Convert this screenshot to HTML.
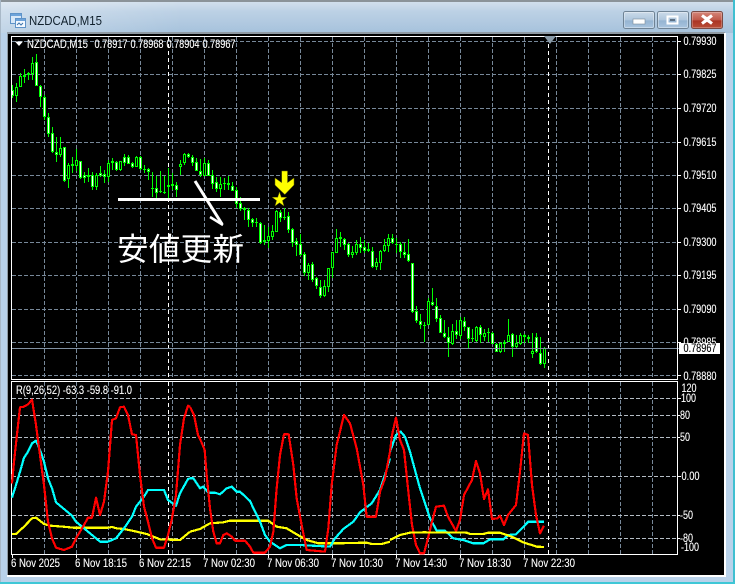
<!DOCTYPE html>
<html><head><meta charset="utf-8"><style>
html,body{margin:0;padding:0;width:735px;height:584px;overflow:hidden;background:#b9d2ea}
svg{display:block;position:absolute;left:0;top:0}
text{font-family:"Liberation Sans",sans-serif;font-size:12px;fill:#fff;stroke:#fff;stroke-width:.12}
.c{font-family:"Liberation Sans","Noto Sans CJK JP",sans-serif;font-size:31.5px;shape-rendering:auto;stroke:none}
</style></head><body>
<svg id="s" width="735" height="584" viewBox="0 0 735 584" xmlns="http://www.w3.org/2000/svg">
<defs>
<linearGradient id="t" x1="0" y1="0" x2="0" y2="1"><stop offset="0" stop-color="#d6e2ee"/><stop offset=".35" stop-color="#bcd1e5"/><stop offset="1" stop-color="#a6c2dc"/></linearGradient>
<linearGradient id="tx" x1="0" y1="0" x2="1" y2="0"><stop offset="0" stop-color="#fff" stop-opacity=".3"/><stop offset=".25" stop-color="#fff" stop-opacity="0"/></linearGradient>
<linearGradient id="b" x1="0" y1="0" x2="0" y2="1"><stop offset="0" stop-color="#cddcea"/><stop offset=".5" stop-color="#aec6dd"/><stop offset=".55" stop-color="#95b4d2"/><stop offset="1" stop-color="#abc6e0"/></linearGradient>
<linearGradient id="r" x1="0" y1="0" x2="0" y2="1"><stop offset="0" stop-color="#d68a7d"/><stop offset=".5" stop-color="#c05848"/><stop offset=".55" stop-color="#aa3524"/><stop offset="1" stop-color="#bb5039"/></linearGradient>
</defs>
<rect width="735" height="584" fill="#b9d2ea"/>
<rect width="735" height="33" fill="url(#t)"/>
<rect width="735" height="33" fill="url(#tx)"/>
<rect width="735" height="2" fill="#8b9399"/>
<rect x="0" y="0" width="1" height="584" fill="#a9b9c8"/>
<rect x="733" y="0" width="2" height="584" fill="#3fbfd0"/>
<rect y="582" width="735" height="2" fill="#3fc7d6"/>
<rect x="7" y="32" width="718" height="2" fill="#8f9aa3"/>
<rect x="7" y="32" width="1" height="545" fill="#8f9aa3"/>
<rect x="8" y="34" width="716" height="541" fill="#000"/>
<rect x="724" y="33" width="2" height="544" fill="#fff"/>
<rect x="7" y="575" width="719" height="2" fill="#fff"/>

<!-- title icon -->
<g>
<rect x="10.5" y="13.5" width="11" height="10" fill="#d8e8f8" stroke="#5f93c8"/>
<rect x="11" y="14" width="10" height="2" fill="#6da3da"/>
<rect x="15.5" y="18.5" width="10" height="9" fill="#f4f9ff" stroke="#5f93c8"/>
<rect x="16" y="19" width="9" height="2" fill="#6da3da"/>
<path d="M17 25l2-2 2 2 2-2" fill="none" stroke="#3d74ad"/>
</g>
<text x="29" y="25" textLength="73" lengthAdjust="spacingAndGlyphs" style="font-size:13px;fill:#10202c;stroke:none">NZDCAD,M15</text>

<!-- buttons -->
<rect x="623.5" y="11.5" width="31" height="17" rx="2" fill="url(#b)" stroke="#6f8395"/>
<rect x="624.5" y="12.5" width="29" height="15" rx="1" fill="none" stroke="#fff" stroke-opacity=".35"/>
<rect x="633" y="19" width="12" height="5" fill="#fff" stroke="#7a8a99" stroke-width=".6"/>
<rect x="657.5" y="11.5" width="31" height="17" rx="2" fill="url(#b)" stroke="#6f8395"/>
<rect x="658.5" y="12.5" width="29" height="15" rx="1" fill="none" stroke="#fff" stroke-opacity=".35"/>
<rect x="667.5" y="16.5" width="10" height="7" fill="none" stroke="#fff" stroke-width="2"/>
<rect x="670" y="19" width="5" height="2" fill="#5c7084"/>
<rect x="691.5" y="11.5" width="31" height="17" rx="2" fill="url(#r)" stroke="#7a4a44"/>
<rect x="692.5" y="12.5" width="29" height="15" rx="1" fill="none" stroke="#fff" stroke-opacity=".25"/>
<path d="M702 15.5l5 3.5 5-3.5M702 23.5l5-3.5 5 3.5M702 15.5L712 23.5M712 15.5L702 23.5" fill="none" stroke="#fff" stroke-width="3"/>

<g id="grid" shape-rendering="crispEdges" fill="none"></g>
<g id="cs" shape-rendering="crispEdges"></g>

<g shape-rendering="crispEdges">
<path d="M12 348.5H680" stroke="#8090a2"/>
<path d="M11 36.5H678M11 379.5H678M11 381.5H678M11 554.5H678M11.5 36V380M11.5 381V555M677.5 36V380M677.5 381V555" stroke="#fff" fill="none"/>
<path d="M678 41.5h3M678 74.5h3M678 108.5h3M678 142.5h3M678 175.5h3M678 208.5h3M678 242.5h3M678 275.5h3M678 309.5h3M678 342.5h3M678 375.5h3M678 398.5h3M678 415.5h2M678 437.5h2M678 476.5h3M678 515.5h2M678 538.5h2M12.5 555v3M76.5 555v3M140.5 555v3M204.5 555v3M268.5 555v3M332.5 555v3M396.5 555v3M460.5 555v3M524.5 555v3" stroke="#fff" fill="none"/>
</g>
<path d="M15 41.5h8l-4 4.5z" fill="#fff"/>
<path d="M544 36h12l-6 8z" fill="#8a9ba8"/>

<!-- legend -->
<text x="27" y="48" textLength="61" lengthAdjust="spacingAndGlyphs">NZDCAD,M15</text>
<text x="94.5" y="48" textLength="33" lengthAdjust="spacingAndGlyphs">0.78917</text>
<text x="130.5" y="48" textLength="33" lengthAdjust="spacingAndGlyphs">0.78968</text>
<text x="166.5" y="48" textLength="33" lengthAdjust="spacingAndGlyphs">0.78904</text>
<text x="202.5" y="48" textLength="33" lengthAdjust="spacingAndGlyphs">0.78967</text>
<text x="16" y="394" textLength="116" lengthAdjust="spacingAndGlyphs">R(9,26,52) -63.3 -59.8 -91.0</text>

<!-- price axis -->
<text x="683.5" y="45" textLength="33" lengthAdjust="spacingAndGlyphs">0.79930</text>
<text x="683.5" y="78" textLength="33" lengthAdjust="spacingAndGlyphs">0.79825</text>
<text x="683.5" y="112" textLength="33" lengthAdjust="spacingAndGlyphs">0.79720</text>
<text x="683.5" y="146" textLength="33" lengthAdjust="spacingAndGlyphs">0.79615</text>
<text x="683.5" y="179" textLength="33" lengthAdjust="spacingAndGlyphs">0.79510</text>
<text x="683.5" y="212" textLength="33" lengthAdjust="spacingAndGlyphs">0.79405</text>
<text x="683.5" y="246" textLength="33" lengthAdjust="spacingAndGlyphs">0.79300</text>
<text x="683.5" y="279" textLength="33" lengthAdjust="spacingAndGlyphs">0.79195</text>
<text x="683.5" y="313" textLength="33" lengthAdjust="spacingAndGlyphs">0.79090</text>
<text x="683.5" y="346" textLength="33" lengthAdjust="spacingAndGlyphs">0.78985</text>
<rect x="679" y="343" width="41" height="11" fill="#fff"/>
<text x="683.5" y="352" textLength="33" lengthAdjust="spacingAndGlyphs" style="fill:#000;stroke:#000">0.78967</text>
<text x="683.5" y="380" textLength="33" lengthAdjust="spacingAndGlyphs">0.78880</text>

<text x="681.5" y="392" textLength="15" lengthAdjust="spacingAndGlyphs">120</text>
<text x="681" y="402" textLength="15" lengthAdjust="spacingAndGlyphs">100</text>
<text x="680" y="419" textLength="10" lengthAdjust="spacingAndGlyphs">80</text>
<text x="680" y="441" textLength="10" lengthAdjust="spacingAndGlyphs">50</text>
<text x="681.5" y="480" textLength="18" lengthAdjust="spacingAndGlyphs">0.00</text>
<text x="680" y="519" textLength="13" lengthAdjust="spacingAndGlyphs">-50</text>
<text x="680" y="542" textLength="13" lengthAdjust="spacingAndGlyphs">-80</text>
<text x="681" y="551" textLength="18" lengthAdjust="spacingAndGlyphs">-100</text>

<!-- time axis -->
<text x="11" y="567" textLength="49" lengthAdjust="spacingAndGlyphs">6 Nov 2025</text>
<text x="75" y="567" textLength="52" lengthAdjust="spacingAndGlyphs">6 Nov 18:15</text>
<text x="139" y="567" textLength="52" lengthAdjust="spacingAndGlyphs">6 Nov 22:15</text>
<text x="203" y="567" textLength="52" lengthAdjust="spacingAndGlyphs">7 Nov 02:30</text>
<text x="267" y="567" textLength="52" lengthAdjust="spacingAndGlyphs">7 Nov 06:30</text>
<text x="331" y="567" textLength="52" lengthAdjust="spacingAndGlyphs">7 Nov 10:30</text>
<text x="395" y="567" textLength="52" lengthAdjust="spacingAndGlyphs">7 Nov 14:30</text>
<text x="459" y="567" textLength="52" lengthAdjust="spacingAndGlyphs">7 Nov 18:30</text>
<text x="523" y="567" textLength="52" lengthAdjust="spacingAndGlyphs">7 Nov 22:30</text>

<!-- indicator lines -->
<svg x="0" y="381" width="678" height="174" viewBox="0 381 678 174">
<g fill="none" stroke-width="6.6" stroke-linejoin="round" shape-rendering="crispEdges">
<g transform="translate(0,375) scale(.33333)">
<polyline stroke="#ffff00" points="36,477 48,477 72,455 96,430 108,428 132,447 150,452 190,455 220,458 324,458 336,456 350,460 372,462 410,470 440,477 480,493 540,495 570,470"/>
<polyline stroke="#00ffff" points="36,368 48,330 60,290 72,248 84,230 96,205 108,197 120,225 132,260 144,310 156,340 168,382 180,392 192,402 216,422 228,440 252,460 276,480 300,500 324,500 348,490 372,460 396,425 408,395 432,365 444,345 492,345 504,375 528,392 540,355 564,312 570,310"/>
<polyline stroke="#ff0000" points="36,325 42,260 60,97 72,95 84,88 96,74 108,150 120,240 132,330 144,440 156,490 168,518 192,525 216,515 228,490 240,470 252,450 264,428 276,428 288,368 300,420 312,380 324,290 336,135 348,130 360,97 372,95 384,120 396,178 408,180 420,300 432,395 444,440 456,490 468,518 492,518 504,480 516,430 528,360 540,210 552,130 564,92 570,95"/>
</g>
<g transform="translate(190,375) scale(.33333)">
<polyline stroke="#ffff00" points="0,470 30,462 60,445 100,442 120,437 235,437 260,455 290,460 320,478 350,495 385,505 440,505 530,503 545,507 575,507 600,500"/>
<polyline stroke="#00ffff" points="0,310 10,310 30,340 40,335 55,353 75,353 90,358 110,340 125,335 140,350 150,350 180,378 195,410 210,440 225,480 240,500 270,520 290,510 330,510 420,515 435,490 460,462 490,440 510,412 545,385 570,345 585,300 600,250"/>
<polyline stroke="#ff0000" points="0,95 12,120 24,180 36,205 44,225 50,300 60,400 70,470 80,505 90,505 100,480 110,475 125,485 135,497 165,497 180,515 190,533 225,533 240,515 250,470 260,340 270,240 282,178 296,178 310,270 320,370 335,450 350,525 405,530 415,460 425,330 440,210 462,120 480,145 500,220 520,330 530,425 558,425 570,350 585,310 600,230"/>
</g>
<g transform="translate(380,375) scale(.33333)">
<polyline stroke="#00ffff" points="30,230 48,180 62,170 75,185 90,230 120,340 150,430 170,467 195,467 220,490 250,495 280,505 310,505 330,493 370,493 385,480 408,478 445,440 492,440"/>
<polyline stroke="#ff0000" points="30,230 36,180 48,128 60,195 72,225 84,340 96,450 108,510 120,535 132,535 144,490 156,440 168,395 192,392 204,425 228,468 240,435 252,360 276,315 288,258 300,295 312,372 324,343 336,432 352,430 360,422 372,450 384,420 408,390 420,290 432,175 444,180 456,330 468,420 480,475 492,452"/>
<polyline stroke="#ffff00" points="30,495 60,480 90,473 130,472 260,473 270,477 310,477 325,473 360,473 400,487 430,502 470,515 492,516"/>
</g>
</g>
</svg>

<!-- annotations -->
<rect x="118" y="198" width="142" height="3" fill="#fff"/>
<path d="M195 181L222 224" stroke="#fff" stroke-width="3" fill="none"/>
<path d="M210 217L223 225" stroke="#fff" stroke-width="2.5" fill="none"/>
<text class="c" x="117" y="260" textLength="127">安値更新</text>
<path d="M281.7 171H287.5V182.7L294 178V185L284.8 194.5L275 185V178L281.7 182.7Z" fill="#ffff00" stroke="#6b6b00" stroke-width=".5"/>
<path d="M279.5 192L281.3 197.3H286.8L282.4 200.6L284 206L279.5 202.7L275 206L276.6 200.6L272.2 197.3H277.7Z" fill="#ffff00" stroke="#6b6b00" stroke-width=".5"/>
</svg>
<script>
var d=[85,98,90,96,1,83,102,87,96,0,73,87,76,87,0,69,83,75,77,1,72,80,73,75,1,57,80,63,74,0,54,86,62,86,1,85,107,86,97,1,95,120,97,117,1,113,137,117,134,1,127,153,133,152,1,137,162,152,155,1,137,157,148,155,0,147,182,147,181,1,163,188,165,179,0,157,173,164,166,1,149,171,160,166,0,161,179,161,178,1,172,183,175,178,1,168,182,175,177,1,172,190,175,187,1,173,190,175,187,0,166,177,173,176,1,170,183,174,177,1,160,182,163,177,0,158,170,161,163,1,161,171,162,170,1,161,171,161,170,0,154,166,157,163,1,155,164,157,164,1,162,168,163,167,1,156,167,157,167,0,156,170,157,169,1,165,173,169,170,1,168,180,169,172,1,172,197,188,189,1,176,198,188,193,1,171,193,191,192,1,176,194,192,193,1,168,198,185,187,1,173,190,184,186,1,182,197,185,190,1,
160,175,164,167,0,153,165,154,163,0,153,158,154,157,1,155,166,157,163,1,158,171,162,171,1,159,177,171,175,1,158,176,163,176,0,160,176,163,176,1,170,189,175,184,1,177,192,182,189,1,177,197,184,189,0,178,190,183,184,1,176,190,183,185,1,182,191,186,191,1,187,208,190,204,1,197,211,203,209,1,207,220,208,210,1,208,227,210,220,1,218,227,219,223,1,218,227,222,223,1,222,244,223,243,1,225,245,240,242,1,227,248,236,241,0,225,240,231,237,0,210,232,211,232,0,210,222,212,218,1,208,220,217,218,1,212,233,216,230,1,228,247,229,243,1,238,256,241,245,1,234,256,244,255,1,252,276,254,273,1,263,280,265,273,0,262,282,264,280,1,277,289,278,286,1,280,298,287,296,1,280,297,286,296,0,268,292,268,287,0,252,278,252,268,0,229,253,238,253,0,232,247,237,239,1,238,250,239,245,1,243,257,244,255,1,246,258,252,255,0,240,255,244,253,0,237,253,244,248,1,240,253,247,251,1,243,252,249,251,1,247,268,251,267,1,258,270,262,267,0,250,270,251,263,0,239,252,245,251,0,234,252,238,246,0,234,244,238,243,1,238,253,244,245,1,242,258,244,252,1,243,258,252,255,1,239,262,254,261,1,263,313,263,312,1,306,323,311,321,1,314,329,321,325,1,322,342,325,326,1,298,325,301,325,0,288,306,302,305,1,298,322,306,319,1,315,333,318,333,1,320,338,333,337,1,327,357,337,343,1,324,345,331,344,0,320,339,331,335,1,317,339,320,336,0,317,331,321,327,1,327,348,327,339,1,329,342,338,339,1,326,342,327,341,0,325,343,327,335,1,329,341,333,337,0,328,342,332,333,1,332,344,333,344,1,343,352,344,352,1,342,353,343,352,0,340,352,342,344,0,319,342,335,342,0,333,357,334,347,1,335,348,343,347,0,333,345,335,344,0,334,343,335,337,1,335,343,337,339,1,333,358,351,354,0,333,353,337,352,1,337,365,353,364,1,347,368,348,364,0];
var NS="http://www.w3.org/2000/svg",h="",i,x;
for(i=0;i<d.length;i+=5){x=12+4*(i/5);
var t=d[i+2],b=d[i+3];
h+='<rect x="'+x+'" y="'+d[i]+'" width="1" height="'+(d[i+1]-d[i])+'" fill="#00ff00"/>';
h+='<rect x="'+(x-1)+'" y="'+t+'" width="3" height="'+Math.max(b-t,1)+'" fill="#00ff00"/>';
if(b-t>2)h+='<rect x="'+x+'" y="'+(t+1)+'" width="1" height="'+(b-t-2)+'" fill="'+(d[i+4]?'#fff':'#000')+'"/>';
}
var tmp=document.createElementNS(NS,"g");tmp.innerHTML=h;document.getElementById("cs").appendChild(tmp);
var v="",g="",w="",hi="";
for(x=44;x<=652;x+=32){v+="M"+(x+.5)+" 37V379M"+(x+.5)+" 382V554";}
[41,74,108,142,175,208,242,275,309,342,375].forEach(function(y){g+="M12 "+(y+.5)+"H677";});
[398,415,437,476,515,538].forEach(function(y){hi+="M12 "+(y+.5)+"H677";});
w="M168.5 37V379M168.5 382V554M548.5 37V379M548.5 382V554";
document.getElementById("grid").innerHTML='<path d="'+v+'" stroke="#778899" stroke-dasharray="4 2"/><path d="'+g+'" stroke="#778899" stroke-dasharray="4 2"/><path d="'+hi+'" stroke="#b4bcc4" stroke-dasharray="4 2"/><path d="'+w+'" stroke="#fff" stroke-dasharray="4 3"/>';
</script>
</body></html>
